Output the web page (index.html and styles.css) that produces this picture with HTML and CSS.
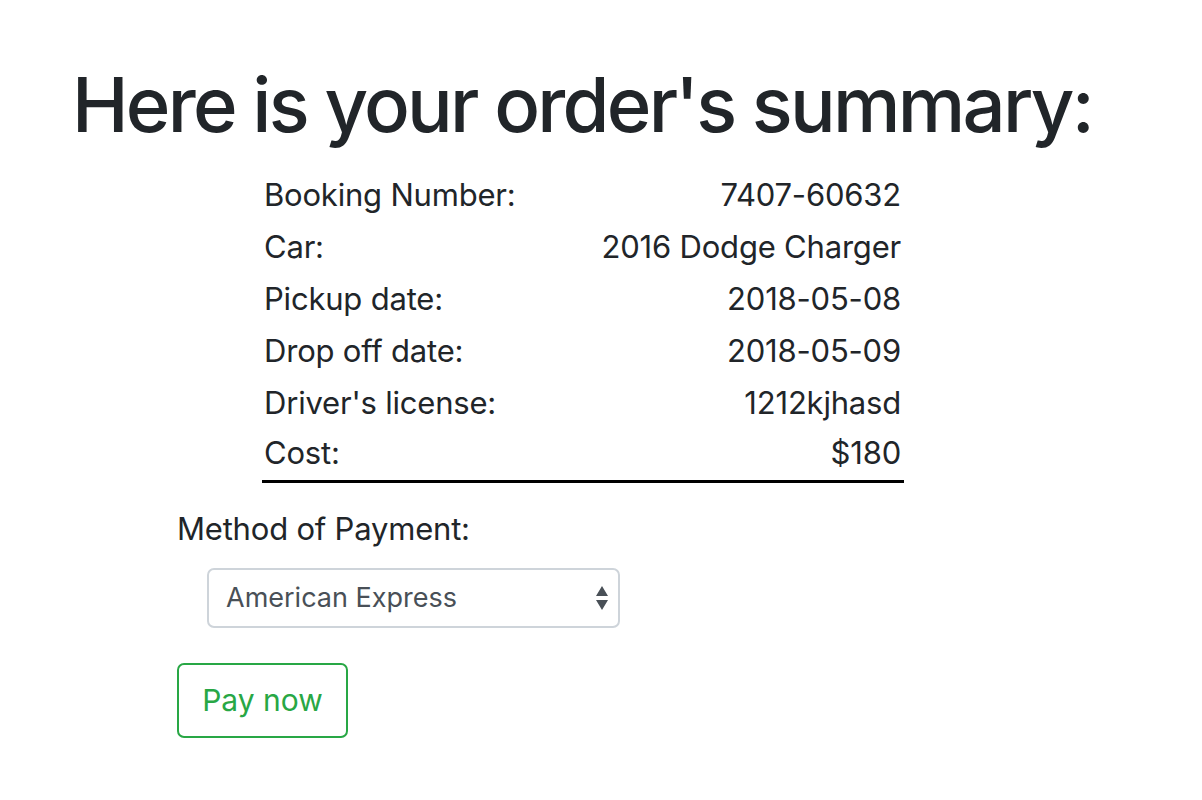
FILE: index.html
```html
<!DOCTYPE html>
<html>
<head>
<meta charset="utf-8">
<link rel="stylesheet" href="styles.css">
</head>
<body>
<main class="page">
  <h1 class="title">Here is your order's summary:</h1>
  <div class="summary">
    <div class="row"><span>Booking Number:</span><span>7407-60632</span></div>
    <div class="row"><span>Car:</span><span>2016 Dodge Charger</span></div>
    <div class="row"><span>Pickup date:</span><span>2018-05-08</span></div>
    <div class="row"><span>Drop off date:</span><span>2018-05-09</span></div>
    <div class="row"><span>Driver's license:</span><span>1212kjhasd</span></div>
    <div class="row last"><span>Cost:</span><span>$180</span></div>
  </div>
  <div class="payment">
    <label class="pay-label">Method of Payment:</label>
    <div class="select">
      <span>American Express</span>
      <svg class="arrows" width="12" height="26" viewBox="0 0 12 26"><path d="M6 1 L12 11 L0 11 Z M6 25 L12 15 L0 15 Z" fill="#495057"/></svg>
    </div>
    <button class="btn">Pay now</button>
  </div>
</main>
</body>
</html>
```
FILE: styles.css
```css
* { box-sizing: border-box; }
body {
  margin: 0;
  font-family: Inter, "Noto Sans", sans-serif;
  color: #212529;
  background: #fff;
}
.page {
  padding: 59px 0 0 72px;
}
.title {
  margin: 0;
  font-size: 76px;
  font-weight: 500;
  line-height: 1.2;
  letter-spacing: -2.75px;
}
.summary {
  width: 642px;
  margin: 18px 0 0 190px;
}
.row {
  display: flex;
  justify-content: space-between;
  align-items: center;
  height: 52px;
  padding: 0 3px 0 2px;
  font-size: 31px;
  letter-spacing: -0.2px;
}
.row.last {
  height: 55px;
  padding-bottom: 3px;
  border-bottom: 3px solid #000;
}
.payment {
  margin-left: 105px;
  padding-top: 23px;
}
.pay-label {
  display: block;
  font-size: 31px;
  line-height: 1.5;
  letter-spacing: -0.2px;
}
.select {
  display: flex;
  justify-content: space-between;
  align-items: center;
  width: 413px;
  height: 60px;
  margin: 15px 0 0 30px;
  padding: 0 10px 0 17px;
  border: 2px solid #ced4da;
  border-radius: 7px;
  font-size: 27px;
  color: #495057;
}
.btn {
  display: block;
  margin-top: 35px;
  width: 171px;
  height: 75px;
  border: 2px solid #28a745;
  border-radius: 7px;
  background: #fff;
  color: #28a745;
  font-family: inherit;
  font-size: 30px;
}
```
